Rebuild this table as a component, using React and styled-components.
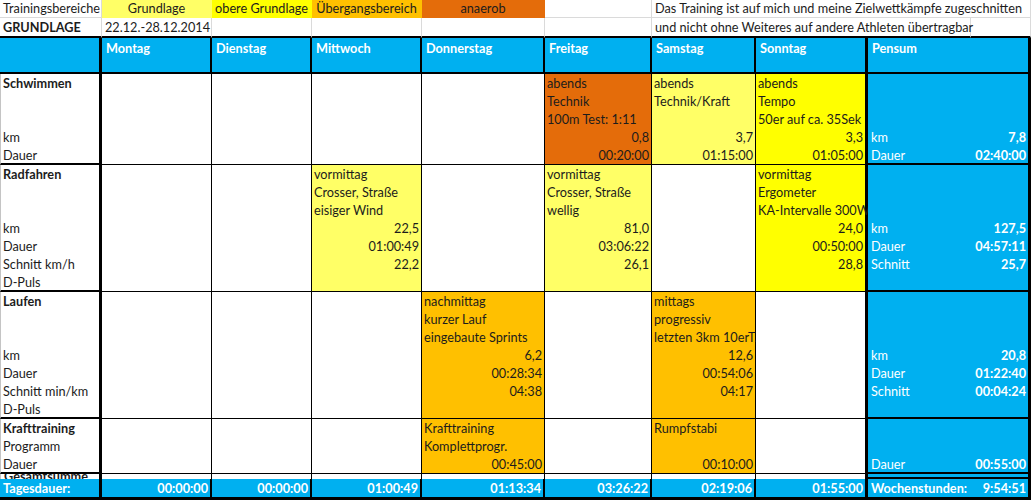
import React from 'react';
import styled, { createGlobalStyle } from 'styled-components';

const FILL = {
  grundlage: '#ffff66',
  obere: '#ffff00',
  uebergang: '#ffc000',
  anaerob: '#e46c0a',
};
const BLUE = '#00b0f0';
const DAYS = ['Montag', 'Dienstag', 'Mittwoch', 'Donnerstag', 'Freitag', 'Samstag', 'Sonntag'];

const L = (text) => ({ text });
const R = (text) => ({ text, right: true });

const sections = [
  {
    name: 'Schwimmen',
    labels: ['', '', 'km', 'Dauer'],
    days: {
      4: { fill: 'anaerob', lines: [L('abends'), L('Technik'), L('100m Test: 1:11'), R('0,8'), R('00:20:00')] },
      5: { fill: 'grundlage', lines: [L('abends'), L('Technik/Kraft'), L(''), R('3,7'), R('01:15:00')] },
      6: { fill: 'obere', lines: [L('abends'), L('Tempo'), L('50er auf ca. 35Sek'), R('3,3'), R('01:05:00')] },
    },
    pensum: [null, null, null, ['km', '7,8'], ['Dauer', '02:40:00']],
  },
  {
    name: 'Radfahren',
    labels: ['', '', 'km', 'Dauer', 'Schnitt km/h', 'D-Puls'],
    days: {
      2: { fill: 'grundlage', lines: [L('vormittag'), L('Crosser, Straße'), L('eisiger Wind'), R('22,5'), R('01:00:49'), R('22,2')] },
      4: { fill: 'grundlage', lines: [L('vormittag'), L('Crosser, Straße'), L('wellig'), R('81,0'), R('03:06:22'), R('26,1')] },
      6: { fill: 'obere', lines: [L('vormittag'), L('Ergometer'), L('KA-Intervalle 300W'), R('24,0'), R('00:50:00'), R('28,8')] },
    },
    pensum: [null, null, null, ['km', '127,5'], ['Dauer', '04:57:11'], ['Schnitt', '25,7']],
  },
  {
    name: 'Laufen',
    labels: ['', '', 'km', 'Dauer', 'Schnitt min/km', 'D-Puls'],
    days: {
      3: { fill: 'uebergang', lines: [L('nachmittag'), L('kurzer Lauf'), L('eingebaute Sprints'), R('6,2'), R('00:28:34'), R('04:38')] },
      5: { fill: 'uebergang', lines: [L('mittags'), L('progressiv'), L('letzten 3km 10erT.'), R('12,6'), R('00:54:06'), R('04:17')] },
    },
    pensum: [null, null, null, ['km', '20,8'], ['Dauer', '01:22:40'], ['Schnitt', '00:04:24']],
  },
  {
    name: 'Krafttraining',
    labels: ['Programm', 'Dauer'],
    days: {
      3: { fill: 'uebergang', lines: [L('Krafttraining'), L('Komplettprogr.'), R('00:45:00')] },
      5: { fill: 'uebergang', lines: [L('Rumpfstabi'), L(''), R('00:10:00')] },
    },
    pensum: [null, null, ['Dauer', '00:55:00']],
  },
];

const totals = ['00:00:00', '00:00:00', '01:00:49', '01:13:34', '03:26:22', '02:19:06', '01:55:00'];

const GlobalStyle = createGlobalStyle`
  body {
    margin: 0;
    background: #fff;
    font-family: Lato, "Open Sans", sans-serif;
    font-size: 12.7px;
    color: #1c1c1c;
  }
`;

const Sheet = styled.div`
  display: grid;
  grid-template-columns: 102px 110px 100px 110px 123px 107px 104px 112px 103px 60px;
  grid-template-rows: 18px 20px 36px 91px 127px 127px 55px 5px 21px;
  width: 1031px;
`;

const LegendCell = styled.div`
  grid-column: span ${(p) => p.$span || 1};
  background: ${(p) => p.$fill || '#fff'};
  border-right: 1px solid ${(p) => (p.$fill ? 'transparent' : '#dadada')};
  border-bottom: 1px solid ${(p) => (p.$fill ? 'transparent' : '#dadada')};
  padding: 0 3px;
  line-height: 17px;
  text-align: ${(p) => (p.$center ? 'center' : 'left')};
  white-space: nowrap;
`;

const InfoCell = styled.div`
  grid-column: span ${(p) => p.$span || 1};
  border-right: 1px solid #dadada;
  border-bottom: 2px solid #000;
  padding: 0 3px;
  line-height: 18px;
  font-weight: ${(p) => (p.$bold ? 700 : 400)};
  white-space: nowrap;
`;

const HeadCell = styled.div`
  grid-column: span ${(p) => p.$span || 1};
  background: ${BLUE};
  color: #fff;
  font-weight: 700;
  border-right: ${(p) => p.$edge || 2}px solid #000;
  border-bottom: 2px solid #000;
  padding: 1px 4px 0;
  line-height: 18px;
`;

const LabelCell = styled.div`
  display: flex;
  flex-direction: column;
  border-left: 1px solid #c4c4c4;
  border-right: 3px solid #000;
  border-bottom: 2px solid #000;
  padding: 0 2px;
  overflow: hidden;
`;

const DayCell = styled.div`
  display: flex;
  flex-direction: column;
  background: ${(p) => (p.$fill ? FILL[p.$fill] : '#fff')};
  border-right: ${(p) => (p.$edge ? 3 : 1)}px solid #000;
  border-bottom: 1px solid #000;
  padding: 0 2px;
`;

const Line = styled.div`
  height: 18px;
  line-height: 18px;
  flex-shrink: 0;
  white-space: nowrap;
  text-align: ${(p) => (p.$right ? 'right' : 'left')};
  font-weight: ${(p) => (p.$bold ? 700 : 400)};
`;

const PensumCell = styled.div`
  grid-column: span 2;
  display: flex;
  flex-direction: column;
  background: ${BLUE};
  color: #fff;
  border-right: 3px solid #000;
  border-bottom: 2px solid #000;
  padding: 0 2px 0 3px;
`;

const PensumLine = styled.div`
  display: flex;
  justify-content: space-between;
  height: 18px;
  line-height: 18px;
  flex-shrink: 0;
`;

const Value = styled.span`
  font-weight: 700;
`;

const GapLabel = styled.div`
  border-left: 1px solid #c4c4c4;
  border-right: 3px solid #000;
  overflow: hidden;
  padding: 0 3px;
  font-weight: 700;
  line-height: 5px;
  white-space: nowrap;
`;

const GapDay = styled.div`
  background: #fff;
  border-right: ${(p) => (p.$edge ? 3 : 1)}px solid #000;
`;

const GapPensum = styled.div`
  grid-column: span 2;
  background: ${BLUE};
  border-right: 3px solid #000;
  border-bottom: 2px solid #000;
`;

const TotalCell = styled.div`
  grid-column: span ${(p) => p.$span || 1};
  display: flex;
  justify-content: ${(p) => (p.$label ? 'flex-start' : 'flex-end')};
  gap: 8px;
  background: ${BLUE};
  color: #fff;
  font-weight: 700;
  border-right: ${(p) => p.$edge || 2}px solid #000;
  border-bottom: 3px solid #000;
  padding: 0 2px 0 3px;
  line-height: 18px;
  white-space: nowrap;

  & > span:last-child:not(:first-child) {
    margin-left: auto;
  }
`;

function Section({ section }) {
  const rows = section.pensum.length;
  return (
    <>
      <LabelCell>
        <Line $bold>{section.name}</Line>
        {section.labels.map((label, i) => (
          <Line key={i}>{label}</Line>
        ))}
      </LabelCell>
      {DAYS.map((day, d) => {
        const entry = section.days[d];
        return (
          <DayCell key={day} $fill={entry && entry.fill} $edge={d === 6}>
            {entry &&
              entry.lines.slice(0, rows).map((line, i) => (
                <Line key={i} $right={line.right}>
                  {line.text}
                </Line>
              ))}
          </DayCell>
        );
      })}
      <PensumCell>
        {section.pensum.map((item, i) => (
          <PensumLine key={i}>
            {item && (
              <>
                <span>{item[0]}</span>
                <Value>{item[1]}</Value>
              </>
            )}
          </PensumLine>
        ))}
      </PensumCell>
    </>
  );
}

export default function App() {
  return (
    <>
      <GlobalStyle />
      <Sheet>
        <LegendCell>Trainingsbereiche</LegendCell>
        <LegendCell $fill={FILL.grundlage} $center>Grundlage</LegendCell>
        <LegendCell $fill={FILL.obere} $center>obere Grundlage</LegendCell>
        <LegendCell $fill={FILL.uebergang} $center>Übergangsbereich</LegendCell>
        <LegendCell $fill={FILL.anaerob} $center>anaerob</LegendCell>
        <LegendCell />
        <LegendCell $span={4}>Das Training ist auf mich und meine Zielwettkämpfe zugeschnitten</LegendCell>

        <InfoCell $bold>GRUNDLAGE</InfoCell>
        <InfoCell>22.12.-28.12.2014</InfoCell>
        <InfoCell />
        <InfoCell />
        <InfoCell />
        <InfoCell />
        <InfoCell $span={3}>und nicht ohne Weiteres auf andere Athleten übertragbar</InfoCell>
        <InfoCell />

        <HeadCell $edge={3} />
        {DAYS.map((day, d) => (
          <HeadCell key={day} $edge={d === 6 ? 3 : 2}>
            {day}
          </HeadCell>
        ))}
        <HeadCell $span={2} $edge={3}>Pensum</HeadCell>

        {sections.map((section) => (
          <Section key={section.name} section={section} />
        ))}

        <GapLabel>Gesamtsumme</GapLabel>
        {DAYS.map((day, d) => (
          <GapDay key={day} $edge={d === 6} />
        ))}
        <GapPensum />

        <TotalCell $label $edge={3}>Tagesdauer:</TotalCell>
        {totals.map((value, d) => (
          <TotalCell key={d} $edge={d === 6 ? 3 : 2}>
            {value}
          </TotalCell>
        ))}
        <TotalCell $span={2} $edge={3} $label>
          <span>Wochenstunden:</span>
          <span>9:54:51</span>
        </TotalCell>
      </Sheet>
    </>
  );
}
